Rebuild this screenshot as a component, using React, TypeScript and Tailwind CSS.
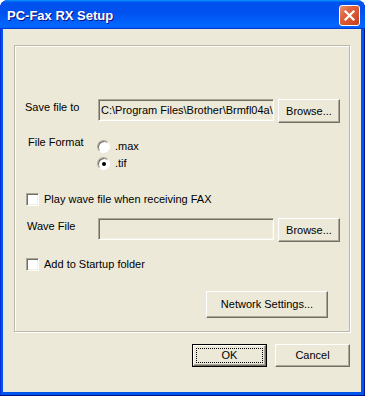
import React from "react";
import clsx from "clsx";

const raised =
  "border border-t-white border-l-white border-b-[#716f64] border-r-[#716f64] shadow-[inset_-1px_-1px_0_#aca899] bg-[#ece9d8]";
const sunken =
  "border border-t-[#aca899] border-l-[#aca899] border-b-white border-r-white shadow-[inset_1px_1px_0_#716f64,inset_-1px_-1px_0_#f1efe2]";

const Button = ({ children, className }: { children: React.ReactNode; className?: string }) => (
  <button className={clsx("flex items-center justify-center text-[11px] leading-[13px] text-black", raised, className)}>
    {children}
  </button>
);

const TextBox = ({ value }: { value?: string }) => (
  <div
    className={clsx(
      "h-[22px] w-[176px] shrink-0 overflow-hidden whitespace-nowrap bg-[#ece9d8] pl-[2px] text-[11px] leading-[20px] text-black",
      sunken
    )}
  >
    {value}
  </div>
);

const Radio = ({ label, checked }: { label: string; checked?: boolean }) => (
  <div className="flex h-[13px] items-center gap-[5px]">
    <div
      className={clsx(
        "flex h-[13px] w-[13px] items-center justify-center rounded-full bg-white",
        "border border-t-[#aca899] border-l-[#aca899] border-b-white border-r-white shadow-[inset_1px_1px_0_#716f64]"
      )}
    >
      {checked && <div className="h-[4px] w-[4px] rounded-full bg-black" />}
    </div>
    <span className="text-[11px] leading-[13px]">{label}</span>
  </div>
);

const Check = ({ label }: { label: string }) => (
  <div className="flex h-[13px] items-center gap-[5px] pl-[11px]">
    <div className={clsx("h-[13px] w-[13px] bg-white", sunken)} />
    <span className="text-[11px] leading-[13px]">{label}</span>
  </div>
);

export default function App() {
  return (
    <div className="flex h-[396px] w-[365px] flex-col overflow-hidden rounded-t-[8px] bg-[#0055ea] font-['Liberation_Sans',Arial,sans-serif] text-black shadow-[inset_-1px_-1px_0_#00138c,inset_1px_0_0_#0831d9]">
      {/* Title bar */}
      <div className="flex h-[29px] shrink-0 items-center justify-between rounded-t-[8px] bg-[linear-gradient(180deg,#0997ff,#0053ee_8%,#0050ee_40%,#0066ff_88%,#0066ff_93%,#005bff_95%,#003dd7_96%,#003dd7)] pl-[7px] pr-[5px]">
        <span className="pt-[2px] text-[13px] font-bold leading-[15px] text-white [text-shadow:1px_1px_0_#0f1089]">
          PC-Fax RX Setup
        </span>
        <div className="mt-[1px] flex h-[21px] w-[21px] items-center justify-center rounded-[3px] border border-white bg-[linear-gradient(135deg,#ec8f70_0%,#e0623c_35%,#d4502a_70%,#c2401a_100%)]">
          <svg width="13" height="13" viewBox="0 0 13 13">
            <path d="M2.5 2.5 L10.5 10.5 M10.5 2.5 L2.5 10.5" stroke="white" strokeWidth="2.2" strokeLinecap="square" />
          </svg>
        </div>
      </div>

      {/* Client area */}
      <div className="mb-[4px] ml-[3px] mr-[4px] flex flex-1 flex-col bg-[#ece9d8] px-[11px] pt-[16px]">
        {/* Group box */}
        <div className="flex h-[287px] w-[336px] flex-col border border-[#bcb9aa] shadow-[inset_1px_1px_0_white,1px_1px_0_white]">
          {/* Save file to */}
          <div className="mt-[53px] flex items-start pl-[10px]">
            <span className="mt-[2px] w-[73px] shrink-0 text-[11px] leading-[13px]">Save file to</span>
            <TextBox value="C:\Program Files\Brother\Brmfl04a\" />
            <Button className="ml-[4px] h-[24px] w-[62px]">Browse...</Button>
          </div>

          {/* File Format */}
          <div className="mt-[13px] flex items-start pl-[13px]">
            <span className="w-[69px] shrink-0 text-[11px] leading-[13px]">File Format</span>
            <div className="mt-[4px] flex flex-col gap-[4px]">
              <Radio label=".max" />
              <Radio label=".tif" checked />
            </div>
          </div>

          <div className="mt-[23px]">
            <Check label="Play wave file when receiving FAX" />
          </div>

          {/* Wave File */}
          <div className="mt-[12px] flex items-start pl-[12px]">
            <span className="mt-[2px] w-[71px] shrink-0 text-[11px] leading-[13px]">Wave File</span>
            <TextBox />
            <Button className="ml-[4px] h-[24px] w-[62px]">Browse...</Button>
          </div>

          <div className="mt-[16px]">
            <Check label="Add to Startup folder" />
          </div>

          <div className="mt-[20px] flex justify-end pr-[21px]">
            <Button className="h-[27px] w-[122px]">Network Settings...</Button>
          </div>
        </div>

        {/* Dialog buttons */}
        <div className="mt-[12px] flex justify-end gap-[8px]">
          <button className="h-[23px] w-[75px] border border-black p-0">
            <div className={clsx("flex h-full w-full items-center justify-center p-[2px]", raised)}>
              <div className="flex h-full w-full items-center justify-center border border-dotted border-black text-[11px] leading-[13px]">
                OK
              </div>
            </div>
          </button>
          <Button className="h-[23px] w-[75px]">Cancel</Button>
        </div>
      </div>
    </div>
  );
}
